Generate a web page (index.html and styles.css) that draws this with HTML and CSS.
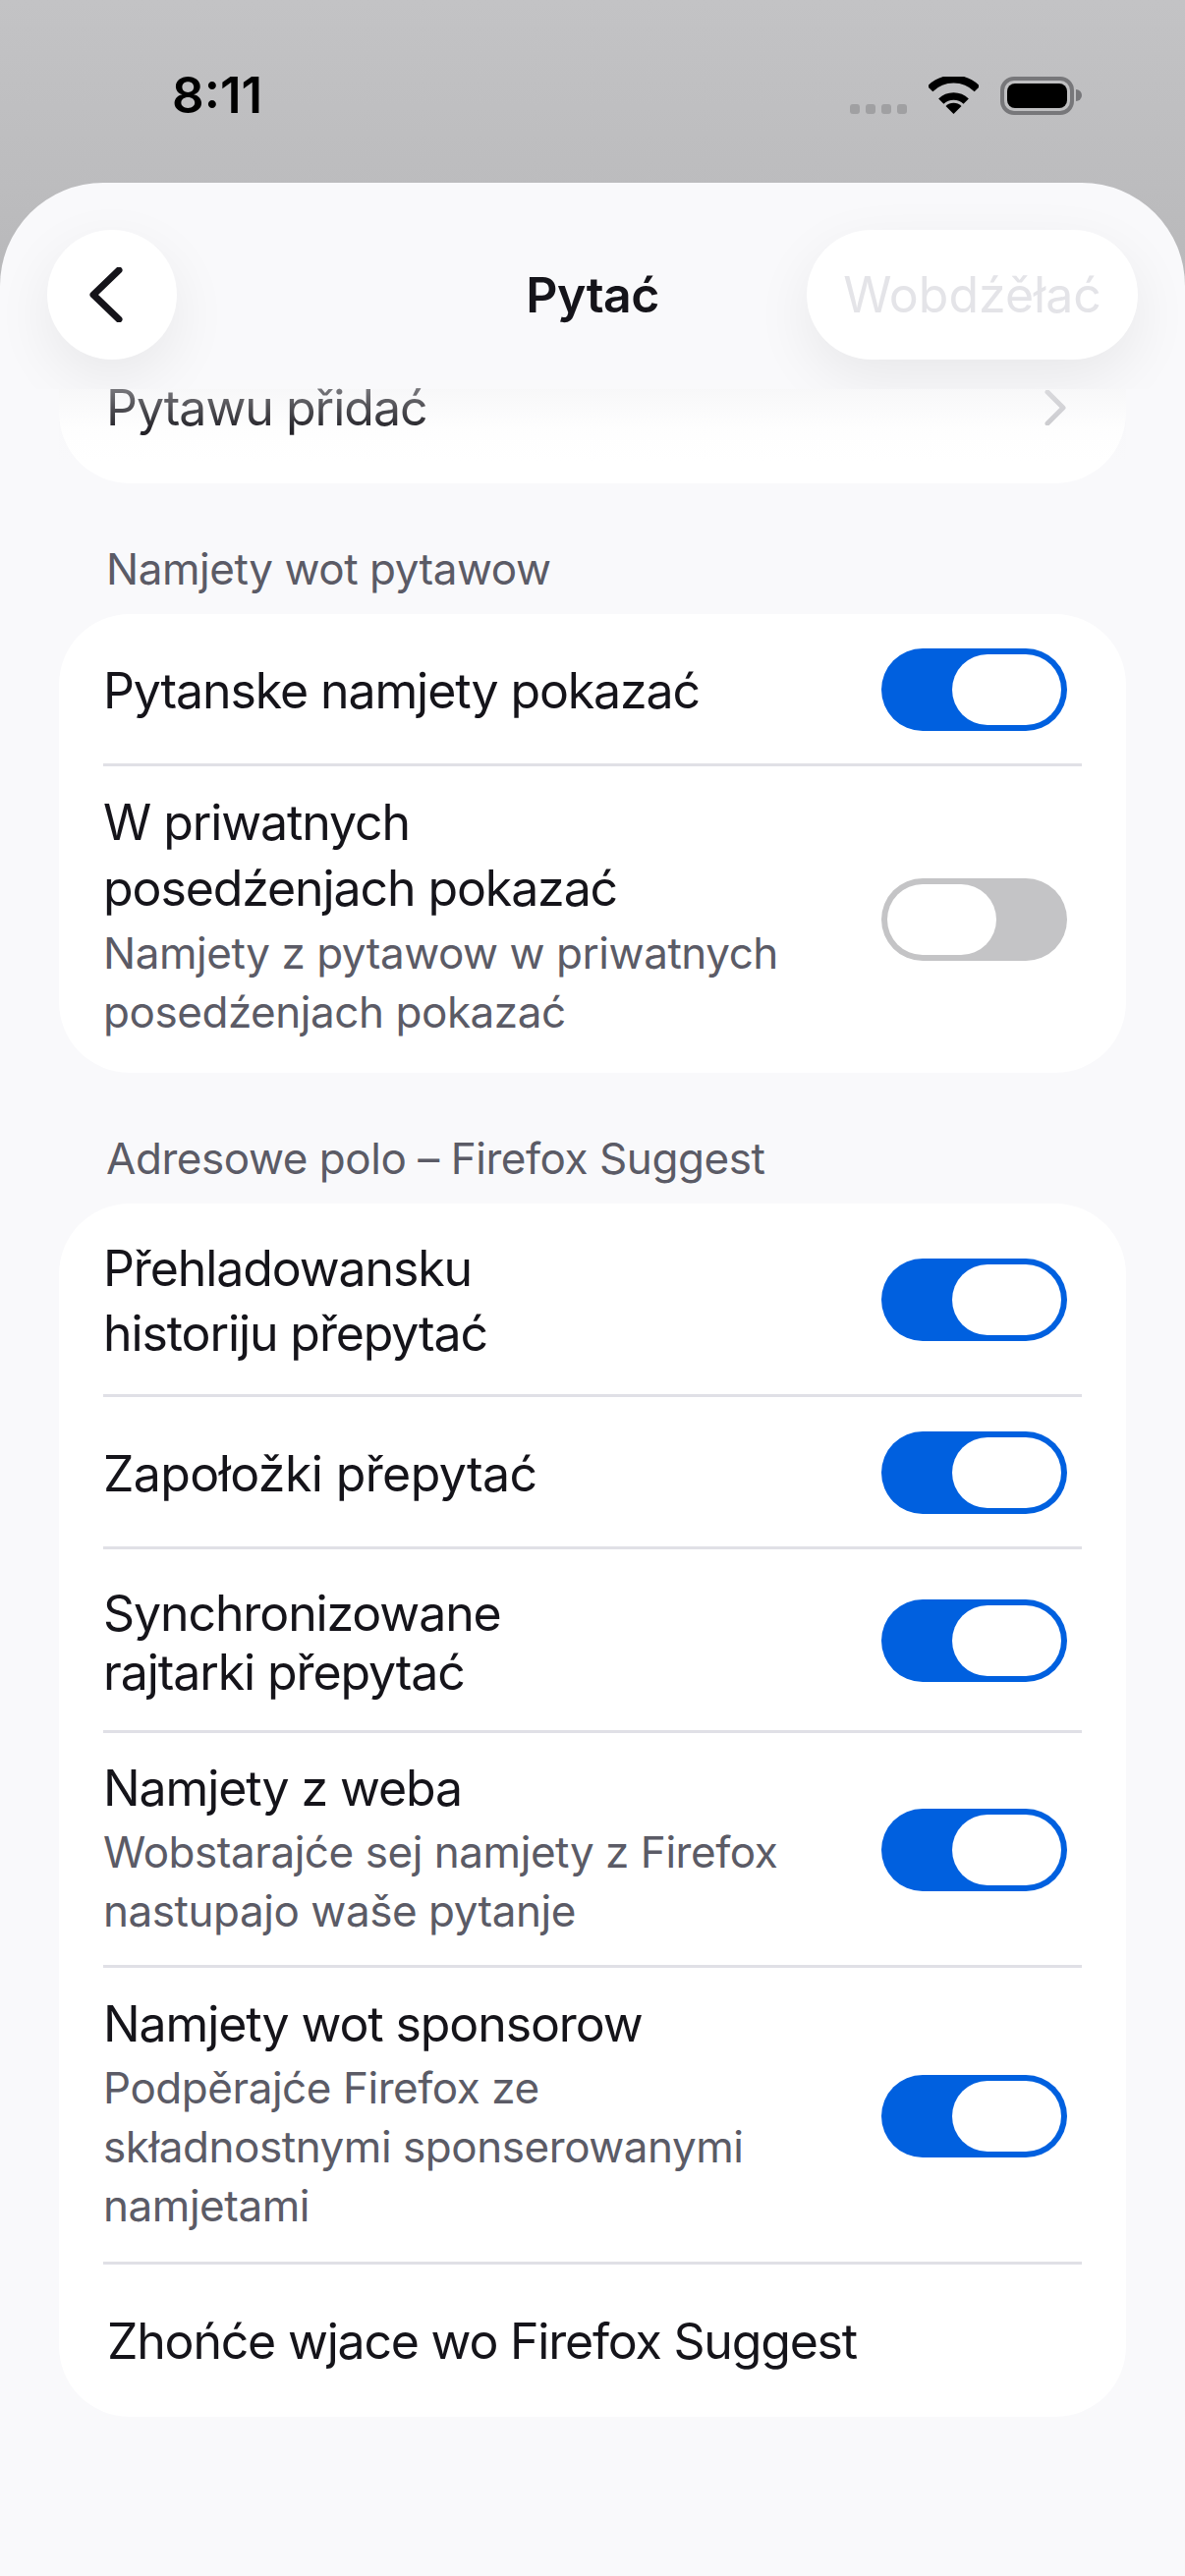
FILE: index.html
```html
<!DOCTYPE html>
<html lang="en">
<head>
    <meta charset="UTF-8">
    <meta name="viewport" content="width=device-width, initial-scale=1.0">
    <title>Pytać</title>
    <link rel="stylesheet" href="styles.css">
</head>
<body>
    <div class="status-bar">
        <span class="time">8:11</span>
        <div class="status-icons">
            <div class="signal"><i></i><i></i><i></i><i></i></div>
            <svg class="wifi" width="51" height="38" viewBox="0 0 51 38">
                <path d="M1.5 12.5 A34 34 0 0 1 49.5 12.5" fill="none" stroke="#000" stroke-width="8"/>
                <path d="M12.8 25.2 A18 18 0 0 1 38.2 25.2" fill="none" stroke="#000" stroke-width="7.5"/>
                <path d="M25.5 38 L17.5 30 A11.5 11.5 0 0 1 33.5 30 Z" fill="#000"/>
            </svg>
            <div class="battery"><div class="battery-fill"></div></div>
            <div class="battery-nub"></div>
        </div>
    </div>

    <div class="sheet">
        <div class="nav">
            <button class="nav-btn back" aria-label="Back">
                <svg width="36" height="56" viewBox="0 0 36 56">
                    <path d="M31 3 L5 28 L31 53" fill="none" stroke="#15141a" stroke-width="7" stroke-linecap="round" stroke-linejoin="round"/>
                </svg>
            </button>
            <h1 class="nav-title">Pytać</h1>
            <button class="nav-btn save">Wobdźěłać</button>
        </div>

        <div class="card card-top">
            <div class="fade"></div>
            <div class="add-row">
                <span class="add-label">Pytawu přidać</span>
                <svg class="chevron" width="24" height="36" viewBox="0 0 24 36">
                    <path d="M4 2 L20 18 L4 34" fill="none" stroke="#c8c8cc" stroke-width="5" stroke-linecap="round" stroke-linejoin="round"/>
                </svg>
            </div>
        </div>

        <div class="section-title">Namjety wot pytawow</div>
        <div class="card">
            <div class="row row-single">
                <div class="row-text"><div class="label">Pytanske namjety pokazać</div></div>
                <div class="toggle on"><div class="thumb"></div></div>
            </div>
            <div class="row row-last row-private">
                <div class="row-text">
                    <div class="label tall">W priwatnych<br>posedźenjach pokazać</div>
                    <div class="sub">Namjety z pytawow w priwatnych<br>posedźenjach pokazać</div>
                </div>
                <div class="toggle off"><div class="thumb"></div></div>
            </div>
        </div>

        <div class="section-title">Adresowe polo – Firefox Suggest</div>
        <div class="card">
            <div class="row row-history">
                <div class="row-text"><div class="label tall">Přehladowansku<br>historiju přepytać</div></div>
                <div class="toggle on"><div class="thumb"></div></div>
            </div>
            <div class="row row-single">
                <div class="row-text"><div class="label label-wide">Zapołožki přepytać</div></div>
                <div class="toggle on"><div class="thumb"></div></div>
            </div>
            <div class="row row-synced">
                <div class="row-text"><div class="label">Synchronizowane<br>rajtarki přepytać</div></div>
                <div class="toggle on"><div class="thumb"></div></div>
            </div>
            <div class="row row-web">
                <div class="row-text">
                    <div class="label">Namjety z weba</div>
                    <div class="sub">Wobstarajće sej namjety z Firefox<br>nastupajo waše pytanje</div>
                </div>
                <div class="toggle on"><div class="thumb"></div></div>
            </div>
            <div class="row row-sponsor">
                <div class="row-text">
                    <div class="label">Namjety wot sponsorow</div>
                    <div class="sub">Podpěrajće Firefox ze<br>składnostnymi sponserowanymi<br>namjetami</div>
                </div>
                <div class="toggle on"><div class="thumb"></div></div>
            </div>
            <div class="row row-last row-link">
                <div class="link-label">Zhońće wjace wo Firefox Suggest</div>
            </div>
        </div>
    </div>
</body>
</html>
```

FILE: styles.css
```css
* {
    box-sizing: border-box;
}
body {
    margin: 0;
    width: 1206px;
    height: 2622px;
    overflow: hidden;
    font-family: 'Inter', sans-serif;
    color: #15141a;
    background: linear-gradient(#c3c3c5, #b8b8ba 300px);
}

/* status bar */
.status-bar {
    height: 186px;
    position: relative;
}
.time {
    position: absolute;
    left: 175px;
    top: 67px;
    font-size: 51px;
    line-height: 60px;
    font-weight: 600;
    color: #000;
}
.status-icons {
    position: absolute;
    left: 865px;
    top: 78px;
    height: 39px;
    display: flex;
    align-items: flex-start;
}
.signal {
    display: flex;
    gap: 6px;
    margin-top: 28px;
    margin-right: 22px;
}
.signal i {
    display: block;
    width: 10px;
    height: 10px;
    border-radius: 3px;
    background-color: #a0a0a2;
}
.wifi {
    margin-right: 22px;
}
.battery {
    width: 75px;
    height: 39px;
    border: 4px solid #77777a;
    border-radius: 14px;
    padding: 3px;
}
.battery-fill {
    height: 100%;
    background-color: #000;
    border-radius: 8px;
}
.battery-nub {
    width: 6px;
    height: 12px;
    margin-top: 13px;
    margin-left: 2px;
    background-color: #77777a;
    border-radius: 0 6px 6px 0;
}

/* sheet */
.sheet {
    height: 2436px;
    background-color: #f9f9fb;
    border-radius: 105px 105px 0 0;
}
.nav {
    height: 210px;
    padding: 48px 48px 0;
    display: grid;
    grid-template-columns: 1fr auto 1fr;
    align-items: start;
    overflow: hidden;
    position: relative;
    z-index: 2;
}
.nav-btn {
    height: 132px;
    border: none;
    padding: 0;
    background-color: #fff;
    border-radius: 66px;
    box-shadow: 0 20px 60px rgba(0, 0, 0, 0.07);
    font-family: inherit;
}
.back {
    width: 132px;
    display: flex;
    align-items: center;
    justify-content: center;
    padding-right: 12px;
}
.save {
    width: 337px;
    justify-self: end;
    font-size: 50px;
    font-weight: 400;
    color: #e4e4e8;
}
.nav-title {
    margin: 0;
    font-size: 50px;
    letter-spacing: -0.5px;
    line-height: 132px;
    font-weight: 600;
}

/* cards */
.card {
    margin: 0 60px;
    background-color: #fff;
    border-radius: 72px;
}
.card-top {
    height: 96px;
    border-radius: 0 0 72px 72px;
    position: relative;
}
.fade {
    position: absolute;
    left: 0;
    right: 0;
    top: 0;
    height: 75px;
    background: linear-gradient(rgba(238, 238, 241, 0.45), rgba(238, 238, 241, 0.08) 40px, rgba(238, 238, 241, 0));
}
.add-row {
    height: 38px;
    padding: 0 60px 0 48px;
    display: flex;
    justify-content: space-between;
    align-items: center;
}
.add-label {
    font-size: 50px;
    letter-spacing: -1px;
    line-height: 38px;
    color: #15141a;
}
.section-title {
    margin: 57px 60px 16px;
    padding-left: 48px;
    font-size: 44px;
    letter-spacing: -0.45px;
    line-height: 60px;
    color: #5b5b66;
}
.row {
    margin: 0 45px;
    padding-right: 15px;
    border-bottom: 3px solid #e0e0e6;
    display: flex;
    align-items: center;
    justify-content: space-between;
}
.row-last {
    border-bottom: none;
}
.row-single {
    height: 155px;
}
.row-single .row-text {
    padding-top: 8px;
}
.row-private {
    height: 312px;
}
.row-private .row-text {
    padding-bottom: 8px;
}
.row-history {
    height: 197px;
}
.row-history .row-text {
    padding-top: 4px;
}
.row-synced {
    height: 187px;
}
.row-synced .row-text {
    padding-top: 10px;
}
.row-web {
    height: 239px;
}
.row-sponsor {
    height: 302px;
}
.row-link {
    height: 155px;
}
.label {
    font-size: 50px;
    letter-spacing: -1.1px;
    line-height: 60px;
    margin-bottom: 5px;
}
.label.tall {
    line-height: 67px;
    margin-bottom: 2px;
}
.label-wide {
    letter-spacing: -0.6px;
}
.row-history .label.tall {
    line-height: 66px;
    margin-bottom: 0;
}
.sub {
    font-size: 44px;
    letter-spacing: -0.45px;
    line-height: 60px;
    color: #5b5b66;
}
.link-label {
    padding-left: 4px;
    font-size: 50px;
    letter-spacing: -1.2px;
    line-height: 60px;
}

/* toggles */
.toggle {
    flex: none;
    width: 189px;
    height: 84px;
    margin-top: 2px;
    padding: 6px;
    border-radius: 42px;
    background-color: #c4c4c6;
    display: flex;
}
.toggle.off {
    margin-top: 0;
}
.toggle.on {
    background-color: #0060df;
    justify-content: flex-end;
}
.thumb {
    width: 111px;
    height: 72px;
    border-radius: 36px;
    background-color: #fff;
}
```
